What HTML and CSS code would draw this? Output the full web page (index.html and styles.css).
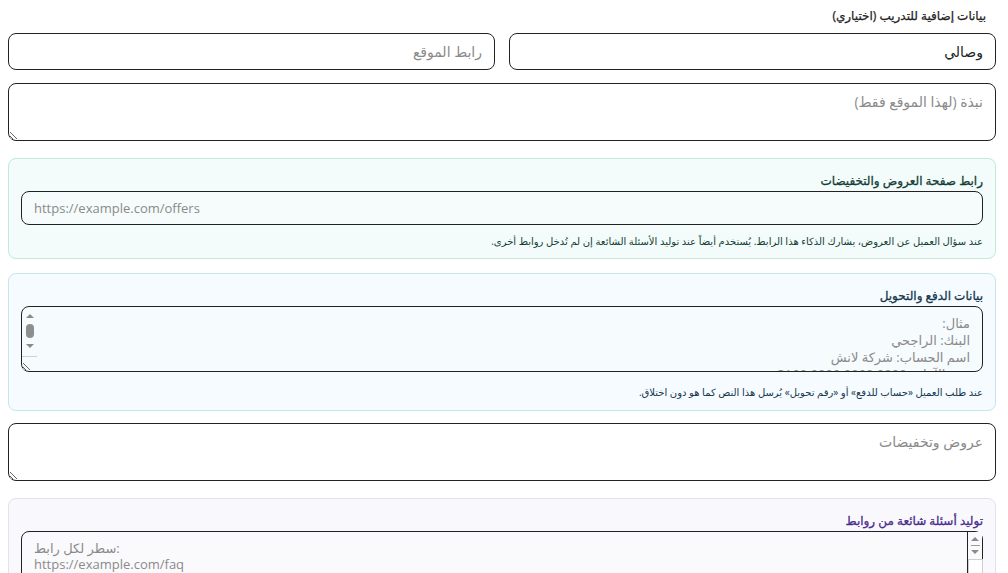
FILE: index.html
```html
<!DOCTYPE html>
<html lang="ar" dir="rtl">
<head>
	<title>بيانات التدريب</title>
	<meta charset="utf-8">
	<link rel="stylesheet" href="styles.css">
</head>

<body>

<form class="train-form">
	<h4 class="section-title">بيانات إضافية للتدريب (اختياري)</h4>

	<div class="row">
		<input type="text" class="field" value="وصالي">
		<input type="text" class="field" placeholder="رابط الموقع">
	</div>

	<textarea class="field area" placeholder="نبذة (لهذا الموقع فقط)"></textarea>

	<!-- offers link -->
	<fieldset class="panel panel-offers">
		<label class="panel-label">رابط صفحة العروض والتخفيضات</label>
		<input type="text" class="field field-sm" dir="ltr" placeholder="https://example.com/offers">
		<p class="hint">عند سؤال العميل عن العروض، يشارك الذكاء هذا الرابط. يُستخدم أيضاً عند توليد الأسئلة الشائعة إن لم تُدخل روابط أخرى.</p>
	</fieldset>

	<!-- payment info -->
	<fieldset class="panel panel-pay">
		<label class="panel-label">بيانات الدفع والتحويل</label>
		<div class="scroll-box">
			<textarea class="field area-pay" placeholder="مثال:
البنك: الراجحي
اسم الحساب: شركة لانش
رقم الآيبان: SA00 0000 0000 0000"></textarea>
			<span class="bar bar-start">
				<i class="arr arr-up"></i>
				<i class="thumb"></i>
				<i class="arr arr-down"></i>
				<i class="bar-line"></i>
			</span>
		</div>
		<p class="hint">عند طلب العميل «حساب للدفع» أو «رقم تحويل» يُرسل هذا النص كما هو دون اختلاق.</p>
	</fieldset>

	<textarea class="field area area-offers" placeholder="عروض وتخفيضات"></textarea>

	<!-- faq from links -->
	<fieldset class="panel panel-faq">
		<label class="panel-label">توليد أسئلة شائعة من روابط</label>
		<div class="scroll-box">
			<textarea class="field area-faq" dir="ltr" placeholder="سطر لكل رابط:
https://example.com/faq
https://example.com/shipping
https://example.com/returns"></textarea>
			<span class="bar bar-end">
				<i class="arr arr-up"></i>
				<i class="bar-sep"></i>
				<i class="arr arr-down"></i>
				<i class="thumb-box"></i>
			</span>
		</div>
		<p class="hint">نقرأ الصفحات ونقترح أسئلة وأجوبة.</p>
	</fieldset>
</form>

</body>
</html>
```

FILE: styles.css
```css
body {
	margin: 0;
	background: #fff;
	font-family: "Open Sans", "DejaVu Sans", sans-serif;
	color: #333;
}
.train-form {
	margin: 0 12px 0 8px;
	padding-top: 8px;
}
.section-title {
	margin: 0 10px 10px 0;
	font-size: 12px;
	line-height: 15px;
	font-weight: normal;
	color: #222;
	-webkit-text-stroke: 0.25px currentColor;
}
.row {
	display: flex;
	gap: 14px;
	margin-bottom: 13px;
}
.row .field {
	flex: 1;
}
.field {
	display: block;
	box-sizing: border-box;
	width: 100%;
	height: 37px;
	margin: 0;
	padding: 0 12px;
	border: 1px solid #222;
	border-radius: 8px;
	background: #fff;
	font-family: inherit;
	font-size: 14px;
	color: #222;
	outline: none;
}
.field::placeholder {
	color: #8a8a8a;
}
.area {
	height: 58px;
	padding: 9px 12px;
	line-height: 18px;
	resize: vertical;
	margin-bottom: 17px;
}
.area-offers {
	margin-top: -1px;
}
.panel {
	margin: 0 0 14px;
	padding: 14px 12px 10px;
	border: 1px solid #c3ebdf;
	border-radius: 8px;
}
.panel-label {
	display: block;
	margin: 0 0 2px;
	font-size: 12px;
	line-height: 16px;
	font-weight: normal;
	-webkit-text-stroke: 0.3px currentColor;
}
.hint {
	margin: 9px 0 0;
	font-size: 10px;
	line-height: 14px;
}
.panel-offers {
	background: #f3fcfa;
	border-color: #bfeadd;
}
.panel-offers .panel-label,
.panel-offers .hint {
	color: #123c35;
}
.field-sm {
	height: 34px;
	font-size: 13px;
	background: #f5fcfb;
}
.panel-pay {
	padding-bottom: 11px;
	background: #f5fbfe;
	border-color: #c6e6ef;
	margin-bottom: 13px;
}
.panel-pay .panel-label,
.panel-pay .hint {
	color: #16364f;
}
.panel-pay .hint {
	margin-top: 13px;
}
.area-pay {
	height: 66px;
	padding: 8px 12px 8px 28px;
	font-size: 13px;
	line-height: 17px;
	background: #f6fbfe;
	overflow: hidden;
	resize: vertical;
}
.panel-faq {
	background: #f9f9fd;
	border-color: #e2e2ee;
}
.panel-faq .panel-label {
	color: #4a2b8c;
}
.area-faq {
	height: 80px;
	padding: 8px 28px 8px 12px;
	font-size: 13px;
	line-height: 16px;
	background: #fafafd;
	overflow: hidden;
}

/* scrollbar drawn over the textarea edge */
.scroll-box {
	position: relative;
}
.bar {
	position: absolute;
	top: 1px;
	width: 15px;
	display: flex;
	flex-direction: column;
	align-items: center;
	padding-top: 7px;
	pointer-events: none;
}
.bar-start {
	left: 1px;
}
.bar-end {
	right: 1px;
	background: #fafafd;
	border-left: 1px solid #222;
	height: 78px;
	padding-top: 5px;
	box-sizing: border-box;
}
.arr {
	width: 0;
	height: 0;
	border-left: 4px solid transparent;
	border-right: 4px solid transparent;
}
.arr-up {
	border-bottom: 4px solid #8a8a8a;
}
.arr-down {
	border-top: 4px solid #8a8a8a;
}
.thumb {
	width: 8px;
	height: 14px;
	margin: 6px 0;
	border-radius: 4px;
	background: #8e8e8e;
}
.bar-line {
	width: 15px;
	height: 1px;
	margin-top: 8px;
	background: #d0d0d0;
}
.bar-sep {
	width: 9px;
	height: 1px;
	margin: 4px 0;
	background: #9a9a9a;
}
.thumb-box {
	width: 13px;
	height: 20px;
	margin-top: 5px;
	border: 1px solid #cfcfcf;
	background: #fff;
}
```
